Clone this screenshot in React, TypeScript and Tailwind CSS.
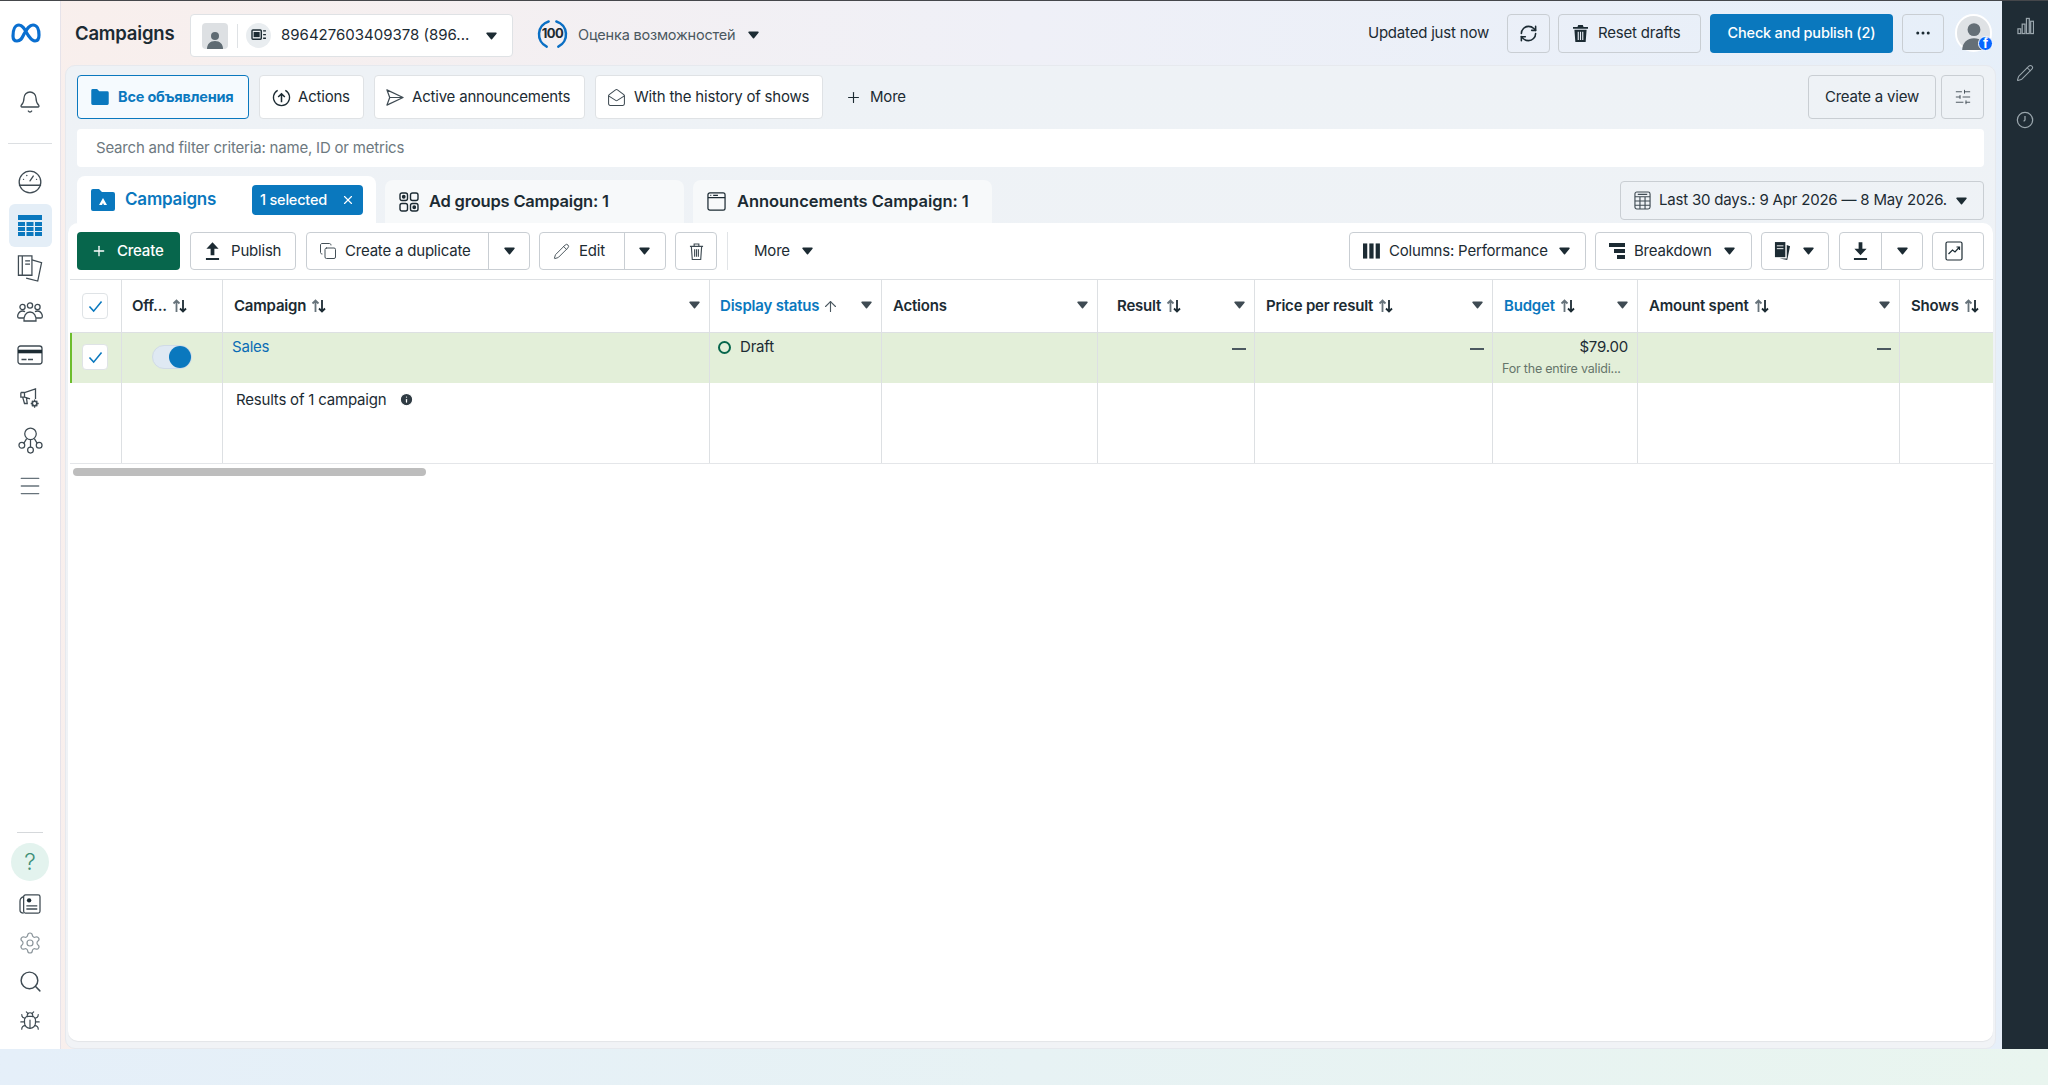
import type { ReactNode } from 'react';
import {
  Bell, Menu, Settings, Search, Bug, RefreshCw, Plus, X,
  MailOpen, ArrowUp, Pencil, Copy, SlidersHorizontal, Ellipsis, Info,
} from 'lucide-react';

const Caret = ({ className = '' }: { className?: string }) => (
  <svg viewBox="0 0 12 8" className={`w-[13px] h-[8px] shrink-0 ${className}`}>
    <path d="M1.5 1.2h9L6 6.8z" fill="currentColor" stroke="currentColor" strokeWidth="1.4" strokeLinejoin="round" />
  </svg>
);

const SortArrows = () => (
  <svg viewBox="0 0 16 16" className="w-[16px] h-[16px] shrink-0" fill="none" strokeWidth="1.8">
    <path d="M4.5 14V3M1.5 5.5l3-3 3 3" stroke="#67737b" />
    <path d="M11 2v11M8 10.5l3 3 3-3" stroke="#1c2b33" />
  </svg>
);

const MetaLogo = () => (
  <svg viewBox="0 0 30 20" className="w-[30px] h-[20px] mr-[8px]" fill="none" stroke="#0a6fd0" strokeWidth="3.2">
    <path d="M2 13c0-6 2-11 6-11 4 0 6 5 9 10 3 4 4 6 7 6s4-2 4-6c0-6-2-10-6-10-4 0-6 4-9 9-2 4-3 7-7 7-3 0-4-2-4-5z" />
  </svg>
);

const GaugeIcon = () => (
  <svg viewBox="0 0 24 24" className="w-[26px] h-[26px]" fill="none" stroke="#3f4b53" strokeWidth="1.2" strokeLinecap="round">
    <circle cx="12" cy="12" r="10" />
    <path d="M2.5 15h19" strokeWidth="1.6" />
    <path d="M12 11l3-4.5M6 9.5h.1M9 6h.1M18 9.5h.1" />
  </svg>
);

const TableIcon = () => (
  <svg viewBox="0 0 24 22" className="w-[24px] h-[22px]" fill="#0a78be">
    <rect x="0" y="0" width="24" height="5" />
    <rect x="0" y="7" width="7" height="4" /><rect x="8.5" y="7" width="7" height="4" /><rect x="17" y="7" width="7" height="4" />
    <rect x="0" y="12" width="7" height="4" /><rect x="8.5" y="12" width="7" height="4" /><rect x="17" y="12" width="7" height="4" />
    <rect x="0" y="17" width="7" height="4" /><rect x="8.5" y="17" width="7" height="4" /><rect x="17" y="17" width="7" height="4" />
  </svg>
);

const PagesIcon = () => (
  <svg viewBox="0 0 26 28" className="w-[26px] h-[27px]" fill="none" stroke="#3f4b53" strokeWidth="1.3">
    <path d="M1 1h14v20H1zM5 1v20M8 6h5M8 9.5h5" />
    <path d="M15 5l10 3-4 19-12-3" />
  </svg>
);

const PeopleIcon = () => (
  <svg viewBox="0 0 26 20" className="w-[26px] h-[20px]" fill="none" stroke="#3f4b53" strokeWidth="1.3">
    <circle cx="5.5" cy="5" r="2.6" /><circle cx="13" cy="3.5" r="2.6" /><circle cx="20.5" cy="5" r="2.6" />
    <path d="M7 19h12c.5-5-2-9-6-9s-6.5 4-6 9z" />
    <path d="M7 16H2c-1.5 0-1.5-2-1-3.5C2 10 3.5 9 5.5 9c1 0 1.8.2 2.5.7M19 16h5c1.5 0 1.5-2 1-3.5C24 10 22.5 9 20.5 9c-1 0-1.8.2-2.5.7" />
  </svg>
);

const CardIcon = () => (
  <svg viewBox="0 0 26 20" className="w-[26px] h-[20px]" fill="none" stroke="#3f4b53" strokeWidth="1.3">
    <rect x="1" y="1" width="24" height="18" rx="2.5" />
    <path d="M1 6.5h24" strokeWidth="3.6" stroke="#1c2b33" />
    <path d="M4.5 14.5h5M11 14.5h5" />
  </svg>
);

const AdsIcon = () => (
  <svg viewBox="0 0 24 24" className="w-[22px] h-[22px]" fill="none" stroke="#3f4b53" strokeWidth="1.4">
    <path d="M2 6h4l12-4v11M2 6v5h4V6M4 11l2 7h3l-1-7M6 11l6 2" />
    <circle cx="17" cy="18" r="2.5" strokeWidth="1.8" />
    <path d="M17 13.5v2M17 20.5v2M12.8 18h2M19.5 18h2M14 15l1.2 1.2M20 15l-1.2 1.2M14 21l1.2-1.2M20 21l-1.2-1.2" />
  </svg>
);

const NetworkIcon = () => (
  <svg viewBox="0 0 26 28" className="w-[25px] h-[27px]" fill="none" stroke="#3f4b53" strokeWidth="1.3">
    <circle cx="13" cy="7" r="6" /><circle cx="4" cy="19" r="3" /><circle cx="13" cy="24" r="3" /><circle cx="22" cy="19" r="3" />
    <path d="M9 12l-3 5M13 13v8M17 12l3 5" />
  </svg>
);

const NewsIcon = () => (
  <svg viewBox="0 0 24 22" className="w-[22px] h-[20px]" fill="none" stroke="#3f4b53" strokeWidth="1.4">
    <rect x="5" y="1" width="18" height="20" rx="2" />
    <path d="M5 3C2 4 1 6 1 8v10c0 2 2 3 4 3M8 13h12M8 16.5h12" />
    <circle cx="11" cy="7" r="2.4" fill="#1c2b33" stroke="none" />
  </svg>
);

const FolderIcon = ({ badge = false, big = false }: { badge?: boolean; big?: boolean }) => (
  <svg viewBox="0 0 24 22" className={`shrink-0 ${big ? 'w-[24px] h-[22px]' : 'w-[18px] h-[16px]'}`}>
    <path d="M0 2a2 2 0 012-2h6l3 3h11a2 2 0 012 2v15a2 2 0 01-2 2H2a2 2 0 01-2-2z" fill="#0a78be" />
    {badge && <path d="M12 9l4 7h-3l-1-2-1 2H8z" fill="#fff" />}
  </svg>
);

const AdGroupsIcon = () => (
  <svg viewBox="0 0 20 20" className="w-[20px] h-[20px] shrink-0" fill="none" stroke="#1c2b33" strokeWidth="1.4">
    <rect x="1" y="1" width="7.5" height="7.5" rx="2" /><rect x="11.5" y="1" width="7.5" height="7.5" rx="2" />
    <rect x="1" y="11.5" width="7.5" height="7.5" rx="2" /><rect x="11.5" y="11.5" width="7.5" height="7.5" rx="2" />
    <circle cx="4.75" cy="4.75" r="1.2" fill="#1c2b33" /><circle cx="15.25" cy="15.25" r="1.2" fill="#1c2b33" />
  </svg>
);

const AdWindowIcon = () => (
  <svg viewBox="0 0 20 20" className="w-[19px] h-[19px] shrink-0" fill="none" stroke="#1c2b33" strokeWidth="1.3">
    <rect x="1" y="1" width="18" height="18" rx="2" />
    <path d="M1 6h18M3.5 3.5h1M6.5 3.5h5" />
  </svg>
);

const CalendarIcon = () => (
  <svg viewBox="0 0 18 20" className="w-[17px] h-[19px] shrink-0" fill="none" stroke="#3f4b53" strokeWidth="1.2">
    <rect x="1" y="1" width="16" height="18" rx="2" />
    <path d="M1 6h16M1 10.5h16M1 15h16M6.3 6v13M11.7 6v13M4 3.5h10" />
  </svg>
);

const UploadFilled = () => (
  <svg viewBox="0 0 16 20" className="w-[15px] h-[19px] shrink-0" fill="#1c2b33">
    <path d="M8 0l6.5 7H10v7H6V7H1.5zM1 17h14v2H1z" />
  </svg>
);

const DownloadFilled = () => (
  <svg viewBox="0 0 16 20" className="w-[15px] h-[19px] shrink-0" fill="#1c2b33">
    <path d="M6 0h4v7h4.500L8 14 1.500 7H6zM1 17h14v2H1z" />
  </svg>
);

const TrashFilled = () => (
  <svg viewBox="0 0 16 18" className="w-[15px] h-[17px] shrink-0" fill="#1c2b33">
    <path d="M5.5 0h5l.7 2H16v2H0V2h4.800zM1.500 5h13l-1 13h-11zM5 7v9h1.200V7zm2.400 0v9h1.200V7zm2.400 0v9H11V7z" fillRule="evenodd" />
  </svg>
);

const TrashOutline = () => (
  <svg viewBox="0 0 16 18" className="w-[15px] h-[17px]" fill="none" stroke="#3f4b53" strokeWidth="1.2">
    <path d="M1 3.5h14M5.5 3V1h5v2M2.5 3.5l1 14h9l1-14M6 6.5v8M8 6.5v8M10 6.5v8" />
  </svg>
);

const ColumnsIcon = () => (
  <svg viewBox="0 0 18 16" className="w-[17px] h-[16px] shrink-0" fill="#1c2b33">
    <rect x="0" y="0" width="4.5" height="16" /><rect x="6.7" y="0" width="4.5" height="16" /><rect x="13.4" y="0" width="4.5" height="16" />
  </svg>
);

const BreakdownIcon = () => (
  <svg viewBox="0 0 16 16" className="w-[16px] h-[16px] shrink-0" fill="#1c2b33">
    <rect x="0" y="0" width="16" height="4" /><rect x="5" y="6" width="11" height="4" /><rect x="8" y="12" width="8" height="4" />
  </svg>
);

const ReportsIcon = () => (
  <svg viewBox="0 0 18 20" className="w-[17px] h-[19px] shrink-0" fill="#1c2b33">
    <path d="M1 0h11v16H1z" />
    <path d="M13.5 3L17 4.5 14 19 6 17.5h7.5z" />
    <path d="M3 4h7M3 7h7" stroke="#fff" strokeWidth="1" />
  </svg>
);

const ChartIcon = () => (
  <svg viewBox="0 0 18 20" className="w-[18px] h-[20px]" fill="none" stroke="#1c2b33" strokeWidth="1.2">
    <rect x="1" y="1" width="16" height="18" rx="1.5" />
    <path d="M3.5 13l4-4 2.5 2 4.5-5M11.5 6h3v3" />
  </svg>
);

const PublishRing = () => (
  <svg viewBox="0 0 20 20" className="w-[19px] h-[19px] shrink-0" fill="none" stroke="#1c2b33" strokeWidth="1.3">
    <path d="M6 2.5a8.5 8.5 0 108 0" />
    <path d="M10 15V6M6.5 9.5L10 6l3.5 3.5" strokeWidth="1.6" />
  </svg>
);

const PlaneIcon = () => (
  <svg viewBox="0 0 20 20" className="w-[19px] h-[19px] shrink-0" fill="none" stroke="#3f4b53" strokeWidth="1.3" strokeLinejoin="round">
    <path d="M2 2l17 8-17 8 3-8zM5 10h14" />
  </svg>
);

const BarsIcon = () => (
  <svg viewBox="0 0 18 18" className="w-[17px] h-[18px]" fill="none" stroke="#9aa6ad" strokeWidth="1.3">
    <rect x="1" y="12" width="3" height="5" /><rect x="5.5" y="7" width="3" height="10" /><rect x="10" y="1" width="3" height="16" /><rect x="14.5" y="4" width="3" height="13" />
  </svg>
);

const ClockIcon = () => (
  <svg viewBox="0 0 20 20" className="w-[18px] h-[18px]" fill="none" stroke="#9aa6ad" strokeWidth="1.4">
    <circle cx="10" cy="10" r="8.5" /><path d="M10 5.5V10l-1.5 1.5" />
  </svg>
);

const SideItem = ({ children, className = 'h-[43px]' }: { children: ReactNode; className?: string }) => (
  <div className={`w-full flex items-center justify-center ${className}`}>{children}</div>
);

const Sidebar = () => (
  <aside className="w-[61px] shrink-0 bg-white border-r border-[#e6e3ea] flex flex-col items-center">
    <SideItem className="h-[40px] mt-[12px]"><MetaLogo /></SideItem>
    <SideItem className="h-[40px] mt-[29px]"><Bell className="w-[24px] h-[26px] text-[#3f4b53]" strokeWidth={1.3} /></SideItem>
    <div className="w-[44px] h-px bg-[#dcdfe2] mt-[21px]" />
    <SideItem className="h-[40px] mt-[18px]"><GaugeIcon /></SideItem>
    <div className="w-[43px] h-[43px] mt-[2px] rounded-[6px] bg-[#e4eef7] flex items-center justify-center"><TableIcon /></div>
    <SideItem><PagesIcon /></SideItem>
    <SideItem><PeopleIcon /></SideItem>
    <SideItem><CardIcon /></SideItem>
    <SideItem><AdsIcon /></SideItem>
    <SideItem><NetworkIcon /></SideItem>
    <SideItem className="h-[47px]"><Menu className="w-[26px] h-[26px] text-[#67737b]" strokeWidth={1.3} /></SideItem>
    <div className="mt-auto w-[26px] h-px bg-[#d5d8db]" />
    <div className="mt-[10px] w-[38px] h-[38px] rounded-full bg-[#e3f3ee] flex items-center justify-center text-[23px] font-light leading-none text-[#3f8f78]">?</div>
    <SideItem className="h-[38px] mt-[4px]"><NewsIcon /></SideItem>
    <SideItem className="h-[39px]"><Settings className="w-[24px] h-[24px] text-[#8b959b]" strokeWidth={1.2} /></SideItem>
    <SideItem className="h-[39px]"><Search className="w-[25px] h-[25px] text-[#3f4b53]" strokeWidth={1.4} /></SideItem>
    <SideItem className="h-[40px] mb-[8px]"><Bug className="w-[22px] h-[22px] text-[#3f4b53]" strokeWidth={1.3} /></SideItem>
  </aside>
);

const Header = () => (
  <header className="h-[64px] shrink-0 flex items-center pl-[14px] pr-[10px]">
    <h1 className="w-[100px] mt-[2px] text-[18.5px] font-semibold whitespace-nowrap text-[#1c2b33]">Campaigns</h1>
    <div className="ml-[15px] mt-[5px] w-[323px] h-[43px] bg-white border border-[#dfe2e5] rounded-[4px] flex items-center pl-[11px]">
      <div className="w-[26px] h-[26px] rounded-[4px] bg-[#dde0e3] flex items-end justify-center overflow-hidden">
        <svg viewBox="0 0 20 20" className="w-[20px] h-[20px]" fill="#5f6b73"><circle cx="10" cy="7" r="4" /><path d="M2 20c0-5 3-8 8-8s8 3 8 8z" /></svg>
      </div>
      <div className="w-px h-[24px] bg-[#dfe2e5] ml-[9px]" />
      <div className="ml-[8px] w-[25px] h-[25px] rounded-full bg-[#e9edf0] flex items-center justify-center">
        <svg viewBox="0 0 16 14" className="w-[15px] h-[13px]" fill="none" stroke="#1c2b33" strokeWidth="1.5"><rect x="1" y="1" width="10" height="10" rx="1" /><rect x="3.5" y="4" width="5" height="4" fill="#1c2b33" /><path d="M13 2h3M13 6h3M13 10h3" /></svg>
      </div>
      <span className="ml-[10px] w-[198px] text-[15px] tracking-normal whitespace-nowrap text-[#1c2b33]">896427603409378 (896...</span>
      <Caret className="ml-[6px] text-[#1c2b33]" />
    </div>
    <div className="ml-[24px] mt-[2px] w-[31px] h-[31px] grid place-items-center">
      <svg viewBox="0 0 32 32" className="col-start-1 row-start-1 w-[31px] h-[31px]" fill="none" stroke="#0a6fc4" strokeWidth="2.6" strokeLinecap="round">
        <path d="M12 2.5a14 14 0 00-2 26M20 2.5a14 14 0 012 26" />
      </svg>
      <span className="col-start-1 row-start-1 text-[13px] font-bold tracking-[-0.6px] text-[#1c2b33]">100</span>
    </div>
    <span className="ml-[10px] mt-[4px] text-[14.5px] whitespace-nowrap text-[#4b5860]">Оценка возможностей</span>
    <Caret className="ml-[12px] mt-[4px] text-[#1c2b33]" />

    <span className="ml-auto text-[15px] whitespace-nowrap text-[#1c2b33]">Updated just now</span>
    <button className="ml-[18px] w-[43px] h-[39px] border border-[#c9ced3] rounded-[4px] flex items-center justify-center">
      <RefreshCw className="w-[19px] h-[19px] text-[#1c2b33]" strokeWidth={2} />
    </button>
    <button className="ml-[8px] w-[143px] h-[39px] border border-[#c9ced3] rounded-[4px] flex items-center gap-[10px] pl-[14px] text-[15px] text-[#1c2b33]">
      <TrashFilled />
      Reset drafts
    </button>
    <button className="ml-[9px] w-[183px] h-[39px] bg-[#0a78be] rounded-[4px] text-[14.5px] font-medium text-white whitespace-nowrap">Check and publish (2)</button>
    <button className="ml-[9px] w-[42px] h-[39px] border border-[#c9ced3] rounded-[4px] flex items-center justify-center">
      <Ellipsis className="w-[18px] h-[18px] text-[#1c2b33]" />
    </button>
    <div className="ml-[11px] relative w-[37px] h-[38px] rounded-full bg-[#dfe2e5] border-2 border-white flex items-end justify-center overflow-visible">
      <svg viewBox="0 0 24 28" className="w-[26px] h-[30px]" fill="#656f76"><circle cx="12" cy="9" r="6" /><path d="M1 28c0-7 5-11 11-11s11 4 11 11z" /></svg>
      <div className="absolute right-[-3px] bottom-[-1px] w-[15px] h-[15px] rounded-full bg-[#0866ff] border border-white flex items-end justify-center overflow-hidden text-white text-[13px] leading-none font-bold">f</div>
    </div>
  </header>
);

const ViewTab = ({ icon, label, className }: { icon: ReactNode; label: string; className: string }) => (
  <button className={`h-[44px] bg-white border border-[#dfe2e5] rounded-[4px] flex items-center text-[15px] text-[#1c2b33] whitespace-nowrap ${className}`}>
    {icon}
    {label}
  </button>
);

const FilterRow = () => (
  <div className="flex items-center h-[44px] gap-[10px]">
    <button className="w-[172px] h-[44px] bg-[#f5fafe] border border-[#0a78be] rounded-[4px] flex items-center gap-[9px] pl-[13px] text-[14.5px] font-bold text-[#0a78be] whitespace-nowrap">
      <FolderIcon />
      Все объявления
    </button>
    <ViewTab icon={<PublishRing />} label="Actions" className="w-[105px] pl-[12px] gap-[7px]" />
    <ViewTab icon={<PlaneIcon />} label="Active announcements" className="w-[211px] pl-[10px] gap-[8px]" />
    <ViewTab icon={<MailOpen className="w-[19px] h-[19px] text-[#3f4b53]" strokeWidth={1.3} />} label="With the history of shows" className="w-[228px] pl-[11px] gap-[8px]" />
    <button className="ml-[12px] flex items-center gap-[8px] text-[15px] text-[#1c2b33]">
      <Plus className="w-[17px] h-[17px]" strokeWidth={1.6} />
      More
    </button>
    <button className="ml-auto w-[128px] h-[44px] border border-[#c9ced3] rounded-[4px] text-[15px] text-[#1c2b33]">Create a view</button>
    <button className="-ml-[5px] w-[43px] h-[44px] border border-[#c9ced3] rounded-[4px] flex items-center justify-center">
      <SlidersHorizontal className="w-[18px] h-[18px] text-[#3f4b53]" strokeWidth={1.2} />
    </button>
  </div>
);

const TabRow = () => (
  <div className="flex items-end h-[47px] mt-[9px] gap-[9px]">
    <div className="w-[299px] h-[47px] bg-white rounded-t-[8px] flex items-center pl-[14px]">
      <FolderIcon badge big />
      <span className="ml-[10px] w-[127px] text-[17px] font-semibold text-[#0a78be]">Campaigns</span>
      <div className="w-[111px] h-[30px] bg-[#0a78be] rounded-[4px] flex items-center pl-[8px] text-[14.5px] font-medium text-white whitespace-nowrap">
        1 selected
        <X className="ml-auto mr-[8px] w-[14px] h-[14px]" strokeWidth={2} />
      </div>
    </div>
    <div className="w-[299px] h-[43px] bg-[#f7f9fa] rounded-t-[8px] flex items-center pl-[14px] gap-[10px] text-[16.5px] font-semibold text-[#1c2b33] whitespace-nowrap">
      <AdGroupsIcon />
      Ad groups Campaign: 1
    </div>
    <div className="w-[299px] h-[43px] bg-[#f7f9fa] rounded-t-[8px] flex items-center pl-[14px] gap-[11px] text-[16.5px] tracking-[-0.05px] font-semibold text-[#1c2b33] whitespace-nowrap">
      <AdWindowIcon />
      Announcements Campaign: 1
    </div>
    <button className="ml-auto mb-[3px] w-[364px] h-[39px] border border-[#c9ced3] rounded-[4px] flex items-center pl-[13px] gap-[8px] text-[15px] text-[#1c2b33] whitespace-nowrap">
      <CalendarIcon />
      Last 30 days.: 9 Apr 2026 — 8 May 2026.
      <Caret className="ml-auto mr-[15px]" />
    </button>
  </div>
);

const ToolButton = ({ children, className = '' }: { children: ReactNode; className?: string }) => (
  <button className={`h-[38px] bg-white border border-[#c9ced3] rounded-[4px] flex items-center text-[15px] text-[#1c2b33] whitespace-nowrap ${className}`}>
    {children}
  </button>
);

const Split = () => <div className="w-px h-full bg-[#c9ced3]" />;

const Toolbar = () => (
  <div className="flex items-center h-[38px] mx-[9px] my-[9px]">
    <button className="w-[103px] h-[38px] bg-[#07664c] rounded-[4px] flex items-center gap-[10px] pl-[14px] text-[15px] font-medium text-white">
      <Plus className="w-[16px] h-[16px]" strokeWidth={2} />
      Create
    </button>
    <ToolButton className="ml-[10px] w-[106px] pl-[14px] gap-[11px]"><UploadFilled />Publish</ToolButton>
    <ToolButton className="ml-[10px] w-[224px]">
      <span className="flex items-center gap-[8px] pl-[12px] w-[181px]"><Copy className="w-[18px] h-[18px] text-[#3f4b53]" strokeWidth={1.3} />Create a duplicate</span>
      <Split />
      <Caret className="ml-[14px]" />
    </ToolButton>
    <ToolButton className="ml-[9px] w-[127px]">
      <span className="flex items-center gap-[9px] pl-[13px] w-[84px]"><Pencil className="w-[17px] h-[17px] text-[#3f4b53]" strokeWidth={1.3} />Edit</span>
      <Split />
      <Caret className="ml-[13px]" />
    </ToolButton>
    <ToolButton className="ml-[9px] w-[42px] justify-center"><TrashOutline /></ToolButton>
    <div className="ml-[10px] w-px h-[38px] bg-[#e1e4e7]" />
    <button className="ml-[26px] flex items-center gap-[11px] text-[15px] text-[#1c2b33]">More<Caret /></button>
    <ToolButton className="ml-auto w-[237px] pl-[13px] gap-[9px]"><ColumnsIcon />Columns: Performance<Caret className="ml-auto mr-[14px]" /></ToolButton>
    <ToolButton className="ml-[9px] w-[157px] pl-[13px] gap-[9px]"><BreakdownIcon />Breakdown<Caret className="ml-auto mr-[15px]" /></ToolButton>
    <ToolButton className="ml-[9px] w-[68px] pl-[12px]"><ReportsIcon /><Caret className="ml-[11px]" /></ToolButton>
    <ToolButton className="ml-[10px] w-[84px]">
      <span className="w-[41px] flex justify-center"><DownloadFilled /></span>
      <Split />
      <Caret className="ml-[14px]" />
    </ToolButton>
    <ToolButton className="ml-[9px] w-[52px] justify-center pr-[8px]"><ChartIcon /></ToolButton>
  </div>
);

type Col = { label: string; pad: string; sort?: 'both' | 'up'; blue?: boolean; caret?: boolean };

const columns: Col[] = [
  { label: 'Off...', pad: 'pl-[10px]', sort: 'both' },
  { label: 'Campaign', pad: 'pl-[11px]', sort: 'both', caret: true },
  { label: 'Display status', pad: 'pl-[10px]', sort: 'up', blue: true, caret: true },
  { label: 'Actions', pad: 'pl-[11px]', caret: true },
  { label: 'Result', pad: 'pl-[19px]', sort: 'both', caret: true },
  { label: 'Price per result', pad: 'pl-[11px]', sort: 'both', caret: true },
  { label: 'Budget', pad: 'pl-[11px]', sort: 'both', blue: true, caret: true },
  { label: 'Amount spent', pad: 'pl-[11px]', sort: 'both', caret: true },
  { label: 'Shows', pad: 'pl-[11px]', sort: 'both' },
];

const gridCols = 'grid grid-cols-[52px_101px_487px_172px_216px_157px_238px_145px_262px_94px]';
const cellBorder = 'border-r border-[#dde0e3]';

const Check = () => (
  <div className="w-[26px] h-[26px] bg-white border border-[#dfe3e6] rounded-[4px] flex items-center justify-center">
    <svg viewBox="0 0 16 14" className="w-[15px] h-[13px]" fill="none" stroke="#0a78be" strokeWidth="1.7"><path d="M1.5 7l4.5 5L14.5 1.5" /></svg>
  </div>
);

const Dash = () => <div className="w-[14px] h-[1.5px] bg-[#4b5860]" />;

const DataTable = () => (
  <div className="border-t border-[#dde0e3] ml-[2px]">
    <div className={`${gridCols} h-[52px]`}>
      <div className={`${cellBorder} flex items-center pl-[12px]`}><Check /></div>
      {columns.map((c, i) => (
        <div key={c.label} className={`${i < columns.length - 1 ? cellBorder : ''} ${c.pad} flex items-center pr-[8px] text-[15px] font-semibold whitespace-nowrap ${c.blue ? 'text-[#0a78be]' : 'text-[#1c2b33]'}`}>
          {c.label}
          {c.sort === 'both' && <span className="ml-[5px]"><SortArrows /></span>}
          {c.sort === 'up' && <ArrowUp className="ml-[3px] w-[17px] h-[17px] text-[#4b5860]" strokeWidth={1.6} />}
          {c.caret && <Caret className="ml-auto text-[#3f4b53] w-[11px] h-[7px] mb-[2px]" />}
        </div>
      ))}
    </div>
    <div className={`${gridCols} h-[51px] bg-[#e3efd9] border-t border-[#dde0e3] shadow-[inset_2px_0_0_#6cbd2c] text-[15px] text-[#1c2b33]`}>
      <div className={`${cellBorder} flex items-center pl-[12px] pb-[2px]`}><Check /></div>
      <div className={`${cellBorder} flex items-center justify-center pb-[2px]`}>
        <div className="w-[40px] h-[24px] bg-[#dfe9f3] border border-[#d0dbe6] rounded-full flex justify-end items-center">
          <div className="w-[22px] h-[22px] rounded-full bg-[#0a78be]" />
        </div>
      </div>
      <div className={`${cellBorder} pl-[9px] pt-[3px] text-[#0a6cb5]`}>Sales</div>
      <div className={`${cellBorder} pl-[8px] pt-[3px] flex items-start gap-[9px]`}>
        <div className="mt-[5px] w-[13px] h-[13px] rounded-full border-2 border-[#07664c]" />
        Draft
      </div>
      <div className={cellBorder} />
      <div className={`${cellBorder} flex justify-end pr-[8px] pt-[15px]`}><Dash /></div>
      <div className={`${cellBorder} flex justify-end pr-[8px] pt-[15px]`}><Dash /></div>
      <div className={`${cellBorder} pl-[9px] pr-[9px] pt-[3px]`}>
        <div className="text-right leading-[22px]">$79.00</div>
        <div className="mt-[2px] text-[12.5px] leading-[18px] text-[#66756a] whitespace-nowrap overflow-hidden">For the entire validi...</div>
      </div>
      <div className={`${cellBorder} flex justify-end pr-[8px] pt-[15px]`}><Dash /></div>
      <div />
    </div>
    <div className={`${gridCols} h-[81px] border-b border-[#e4e6e9]`}>
      <div className={cellBorder} />
      <div className={cellBorder} />
      <div className={`${cellBorder} pl-[13px] pt-[6px] flex items-start text-[15px] text-[#1c2b33] whitespace-nowrap`}>
        Results of 1 campaign
        <Info className="ml-[13px] mt-[3px] w-[15px] h-[15px] text-white fill-[#2f3b43]" strokeWidth={2} />
      </div>
      <div className={cellBorder} />
      <div className={cellBorder} />
      <div className={cellBorder} />
      <div className={cellBorder} />
      <div className={cellBorder} />
      <div className={cellBorder} />
      <div />
    </div>
    <div className="mt-[4px] ml-[3px] w-[353px] h-[8px] rounded-full bg-[#bdbdbd]" />
  </div>
);

const MainPanel = () => (
  <section className="flex-1 min-h-0 ml-[4px] mr-[6px] bg-gradient-to-b from-[#eef2f6] to-[#f1f3f6] border border-[#e6e9ee] rounded-[10px] flex flex-col pt-[9px]">
    <div className="px-[11px]">
      <FilterRow />
      <div className="mt-[10px] h-[38px] bg-white rounded-[4px] flex items-center pl-[19px] text-[15px] text-[#6d7980] whitespace-nowrap">
        Search and filter criteria: name, ID or metrics
      </div>
      <TabRow />
    </div>
    <div className="flex-1 min-h-0 mx-[2px] mb-[7px] bg-white rounded-[10px] shadow-[0_1px_1px_rgba(0,0,0,0.06)]">
      <Toolbar />
      <DataTable />
    </div>
  </section>
);

const RightRail = () => (
  <aside className="w-[46px] shrink-0 bg-[#1f2c35] flex flex-col items-center">
    <div className="h-[50px] flex items-center"><BarsIcon /></div>
    <div className="h-[44px] flex items-center"><Pencil className="w-[18px] h-[18px] text-[#9aa6ad]" strokeWidth={1.4} /></div>
    <div className="h-[50px] flex items-center"><ClockIcon /></div>
  </aside>
);

export default function App() {
  return (
    <div className="w-[2048px] h-[1085px] overflow-hidden flex flex-col tracking-[-0.2px] bg-gradient-to-r from-[#e5eff9] to-[#e9f5ef] font-['Inter','Liberation_Sans',sans-serif]">
      <div className="h-px bg-[#45474b]" />
      <div className="h-[1048px] flex bg-gradient-to-r from-[#f9efec] via-[#eff0f7] to-[#e6eff9]">
        <Sidebar />
        <main className="flex-1 min-w-0 flex flex-col">
          <Header />
          <MainPanel />
        </main>
        <RightRail />
      </div>
    </div>
  );
}
